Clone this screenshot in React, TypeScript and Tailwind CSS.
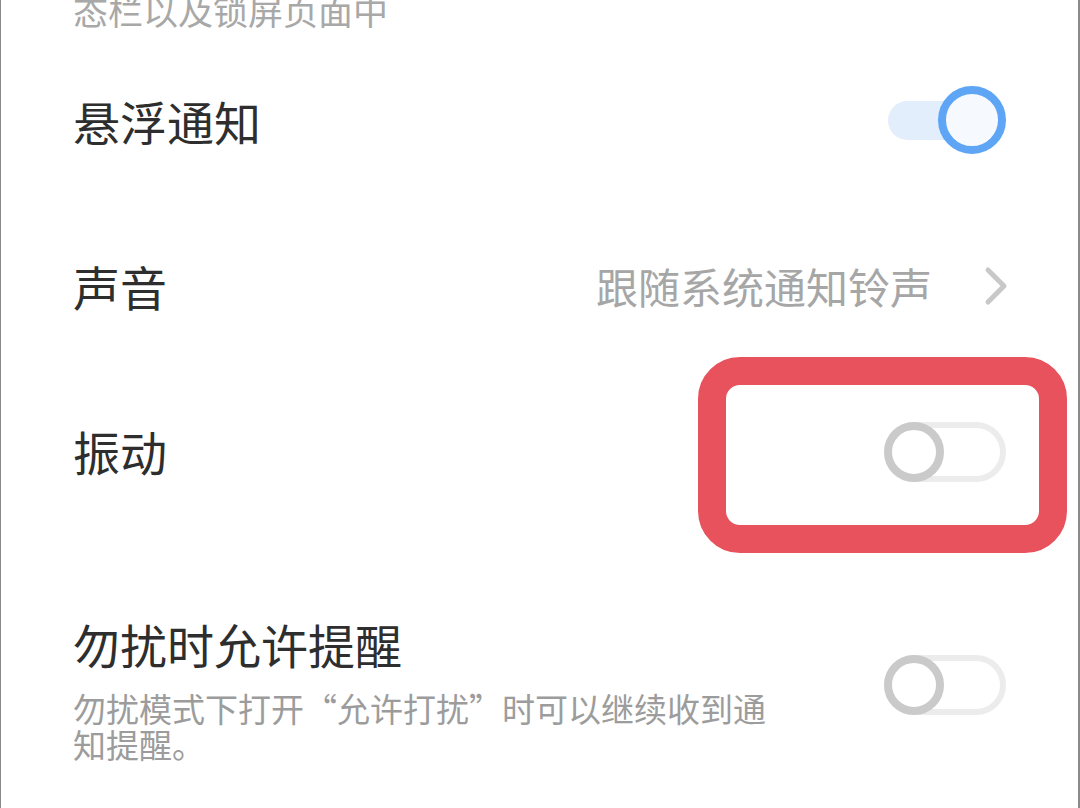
import React from "react";

const cjk = { fontFamily: '"Noto Sans CJK SC", "Noto Sans", sans-serif' };

function SwitchOn() {
  return (
    <div className="relative w-[118px] h-[68px] shrink-0">
      <div className="absolute left-0 top-[15px] w-[100px] h-[39px] rounded-full bg-[#e3eefc]" />
      <div className="absolute right-0 top-0 w-[68px] h-[68px] rounded-full border-[8px] border-[#5ea6f5] bg-[#f6f9fe]" />
    </div>
  );
}

function SwitchOff() {
  return (
    <div className="relative w-[122px] h-[60px] shrink-0">
      <div className="absolute inset-0 rounded-full border-[6px] border-[#ececec] bg-white" />
      <div className="absolute left-0 top-0 w-[60px] h-[60px] rounded-full border-[8px] border-[#cacaca] bg-white" />
    </div>
  );
}

export default function App() {
  return (
    <div
      className="relative w-[1080px] h-[808px] overflow-hidden bg-white border-l border-r-2 border-[#8a8a8a]"
      style={cjk}
    >
      <div className="pl-[72px] pr-[72px]">
        <p className="-mt-[9px] text-[35px] leading-[38px] text-[#a8a8a8]">态栏以及锁屏页面中</p>

        <div className="mt-[9px] h-[165px] flex items-center justify-between">
          <span className="text-[47px] leading-[56px] text-[#2e2e2e]">悬浮通知</span>
          <div className="-mt-[2px]">
            <SwitchOn />
          </div>
        </div>

        <div className="h-[165px] flex items-center justify-between">
          <span className="text-[47px] leading-[56px] text-[#2e2e2e]">声音</span>
          <div className="flex items-center gap-[52px]">
            <span className="text-[42px] leading-[50px] text-[#a6a6a6]">跟随系统通知铃声</span>
            <svg width="24" height="40" viewBox="0 0 24 40" fill="none" className="mr-[-2px]">
              <path d="M4 4 L20 20 L4 36" stroke="#c8c8c8" strokeWidth="5" strokeLinecap="round" strokeLinejoin="round" />
            </svg>
          </div>
        </div>

        <div className="h-[165px] flex items-center justify-between">
          <span className="text-[47px] leading-[56px] text-[#2e2e2e]">振动</span>
          <div className="mt-[2px]">
            <SwitchOff />
          </div>
        </div>

        <div className="pt-[83px] flex items-center justify-between">
          <div className="flex flex-col">
            <span className="text-[47px] leading-[56px] text-[#2e2e2e]">勿扰时允许提醒</span>
            <p className="mt-[18px] max-w-[700px] text-[33px] leading-[36px] text-[#9c9c9c]">
              勿扰模式下打开“允许打扰”时可以继续收到通知提醒。
            </p>
          </div>
          <div className="-mt-[8px]">
            <SwitchOff />
          </div>
        </div>
      </div>

      <div className="absolute left-[697px] top-[357px] w-[369px] h-[196px] rounded-[42px] border-[28px] border-[#e8525c]" />
    </div>
  );
}
